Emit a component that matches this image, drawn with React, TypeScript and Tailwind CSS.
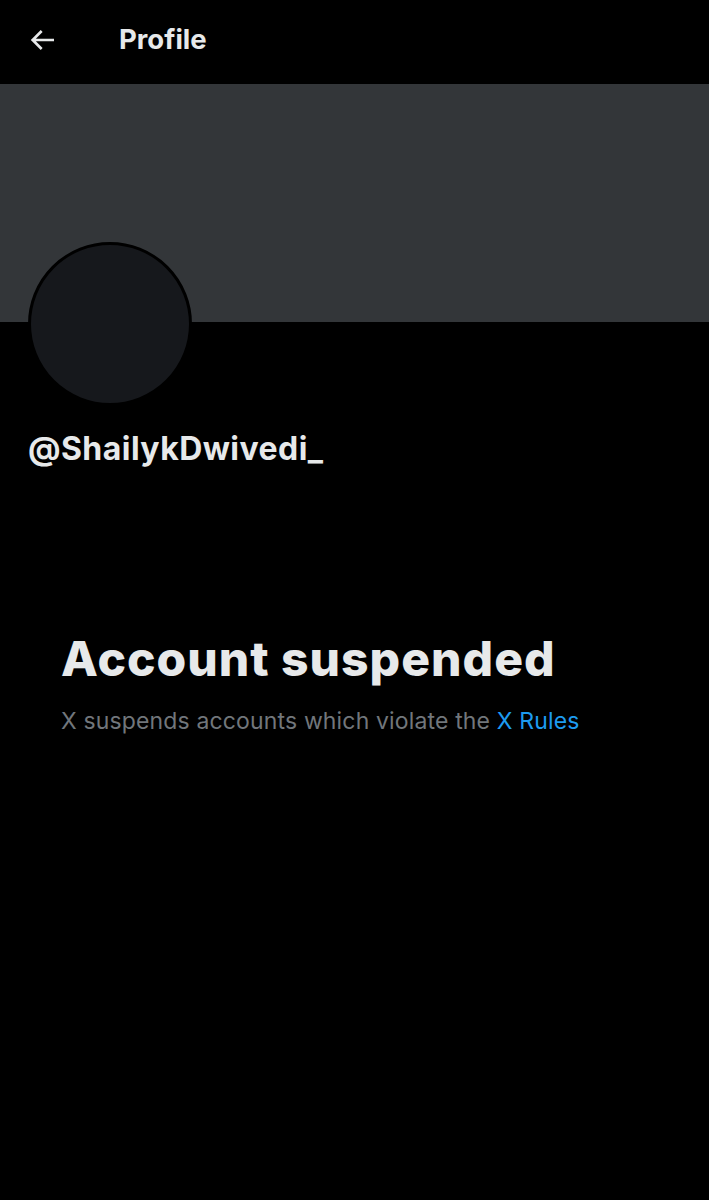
export default function App() {
  return (
    <div className="min-h-[1200px] w-full bg-black font-['Inter','Noto_Sans',sans-serif] text-[#e7e9ea]">
      {/* Header */}
      <header className="flex h-[84px] items-center pb-[4px]">
        <button className="ml-[26px] flex h-8 w-8 items-center justify-center" aria-label="Back">
          <svg viewBox="0 0 24 24" className="h-8 w-8" fill="currentColor">
            <path d="M7.414 13l5.043 5.04-1.414 1.42L3.586 12l7.457-7.46 1.414 1.42L7.414 11H21v2H7.414z" />
          </svg>
        </button>
        <h1 className="ml-[61px] text-[27.5px] font-bold leading-none">Profile</h1>
      </header>

      {/* Banner */}
      <div className="h-[238px] bg-[#333639]" />

      {/* Avatar + handle */}
      <div className="px-[28px]">
        <div className="-mt-[80px] h-[164px] w-[164px] rounded-full border-[3px] border-black bg-[#16181c]" />
        <div className="mt-[25px] text-[32px] font-bold leading-9 tracking-[0.45px]">@ShailykDwivedi_</div>
      </div>

      {/* Suspended notice */}
      <div className="mt-[164px] px-[61px]">
        <h2 className="text-[48px] font-extrabold leading-[56px] tracking-[1px]">Account suspended</h2>
        <p className="mt-[20px] text-[23px] leading-7 tracking-[0.15px] text-[#71767b]">
          X suspends accounts which violate the <span className="text-[#1d9bf0]">X Rules</span>
        </p>
      </div>
    </div>
  );
}
